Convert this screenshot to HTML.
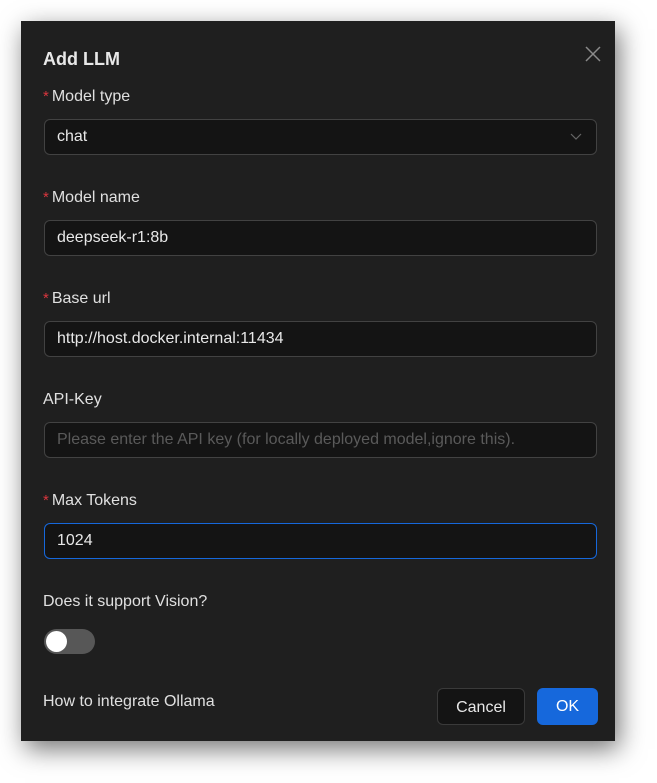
<!DOCTYPE html>
<html><head><style>
body{margin:0;width:657px;height:783px;background:#fff;font-family:"Liberation Sans",sans-serif;position:relative;overflow:hidden}
.dlg{position:absolute;left:21px;top:21px;width:594px;height:720px;background:#1f1f1f;box-shadow:4px 8px 24px rgba(0,0,0,.55)}
.t{position:absolute;left:43px;color:#e8e8e8;font-size:16px}
.lab{position:absolute;left:43px;color:#e0e0e0;font-size:16px}
.lab .s{color:#d9363e;font-size:15px;margin-right:3px}
.in{position:absolute;left:44px;height:34px;background:#141414;border:1px solid #424242;border-radius:6px;color:#e8e8e8;font-size:16px;line-height:34px;padding-left:12px;box-sizing:content-box;width:539px}
</style></head><body>
<div class="dlg"></div>
<div class="t" style="top:49px;font-weight:bold;font-size:18px">Add LLM</div>
<svg style="position:absolute;left:585px;top:46px" width="16" height="16"><path d="M1 1L15 15M15 1L1 15" stroke="#8a8a8a" stroke-width="1.5"/></svg>
<div class="lab" style="top:88px"><span class="s">*</span>Model type</div>
<div class="in" style="top:119px">chat<svg style="position:absolute;right:14px;top:13px" width="12" height="8"><path d="M1 1L6 6L11 1" stroke="#666" fill="none" stroke-width="1.2"/></svg></div>
<div class="lab" style="top:189px"><span class="s">*</span>Model name</div>
<div class="in" style="top:220px">deepseek-r1:8b</div>
<div class="lab" style="top:290px"><span class="s">*</span>Base url</div>
<div class="in" style="top:321px">http://host.docker.internal:11434</div>
<div class="lab" style="top:391px">API-Key</div>
<div class="in" style="top:422px;color:#5a5a5a">Please enter the API key (for locally deployed model,ignore this).</div>
<div class="lab" style="top:492px"><span class="s">*</span>Max Tokens</div>
<div class="in" style="top:523px;border-color:#1668dc">1024</div>
<div class="lab" style="top:593px">Does it support Vision?</div>
<div style="position:absolute;left:44px;top:629px;width:51px;height:25px;border-radius:13px;background:#575757"><div style="position:absolute;left:2px;top:2px;width:21px;height:21px;border-radius:50%;background:#fff"></div></div>
<div class="lab" style="top:693px">How to integrate Ollama</div>
<div style="position:absolute;left:437px;top:688px;width:86px;height:35px;border:1px solid #3a3a3a;border-radius:6px;background:#141414;color:#e8e8e8;font-size:16px;text-align:center;line-height:37px">Cancel</div>
<div style="position:absolute;left:537px;top:688px;width:61px;height:37px;border-radius:6px;background:#1668dc;color:#fff;font-size:16px;text-align:center;line-height:37px">OK</div>
</body></html>
